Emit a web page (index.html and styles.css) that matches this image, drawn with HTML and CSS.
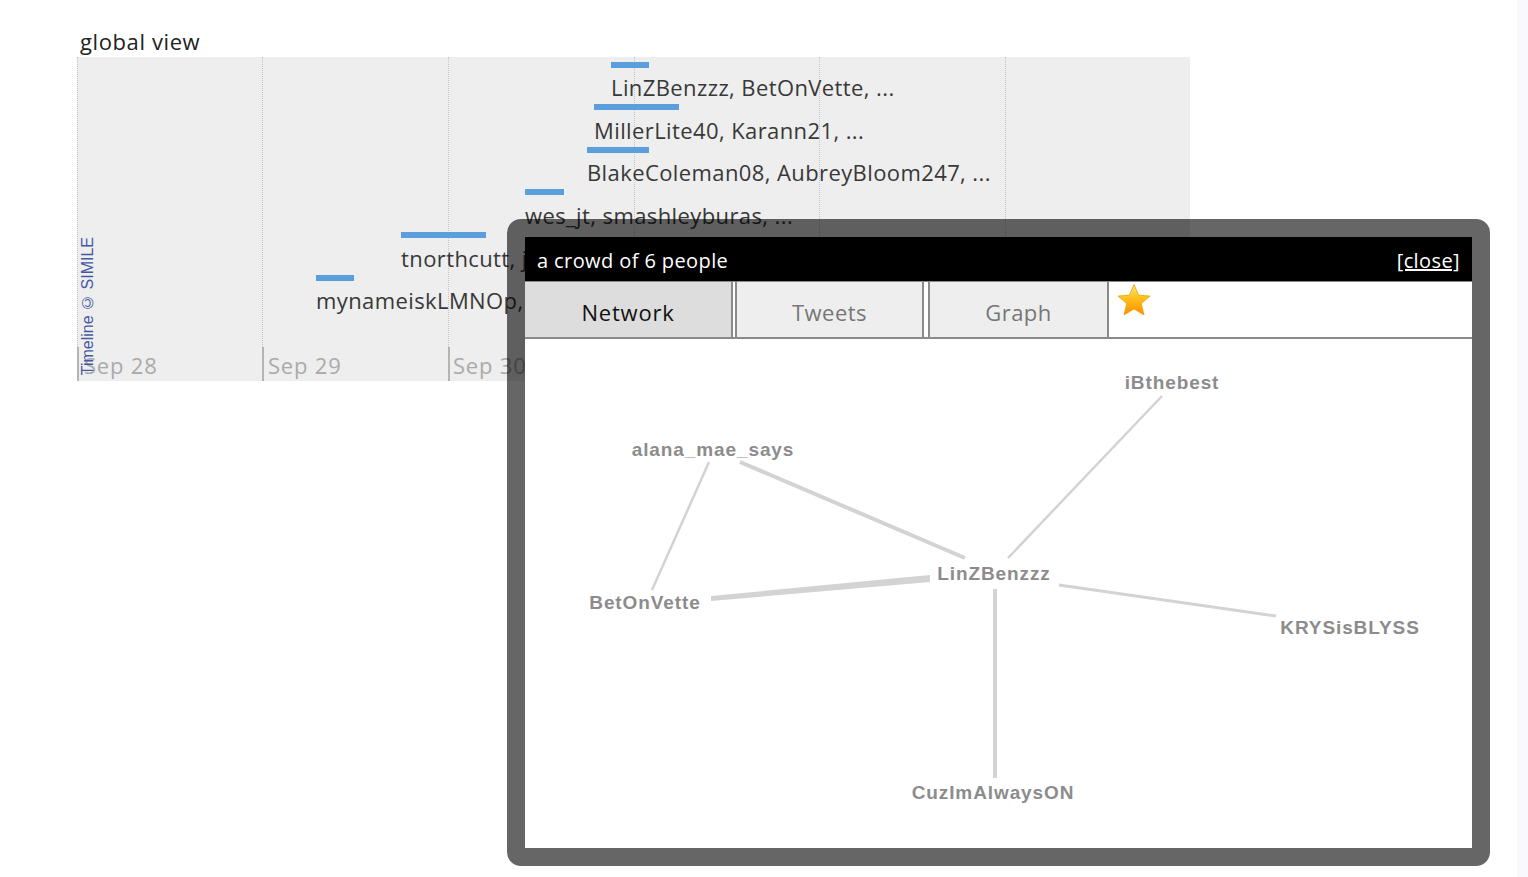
FILE: index.html
```html
<!DOCTYPE html>
<html>
<head>
<meta charset="utf-8">
<title>global view</title>
<link rel="stylesheet" href="styles.css">
</head>
<body>
<div class="page">
  <h1 class="title">global view</h1>
  <div class="band">
    <div class="grid" style="left:0px"></div>
    <div class="grid" style="left:185px"></div>
    <div class="grid" style="left:371px"></div>
    <div class="grid" style="left:557px"></div>
    <div class="grid" style="left:742px"></div>
    <div class="grid" style="left:928px"></div>

    <div class="tick" style="left:0px"></div>
    <div class="tick" style="left:185px"></div>
    <div class="tick" style="left:371px"></div>
    <div class="tick" style="left:557px"></div>
    <div class="tick" style="left:742px"></div>
    <div class="tick" style="left:928px"></div>

    <div class="date" style="left:7px">Sep 28</div>
    <div class="date" style="left:191px">Sep 29</div>
    <div class="date" style="left:376px">Sep 30</div>
    <div class="date" style="left:562px">Oct 1</div>
    <div class="date" style="left:747px">Oct 2</div>
    <div class="date" style="left:933px">Oct 3</div>

    <div class="credit">Timeline © SIMILE</div>

    <div class="bar" style="left:534px;top:5px;width:38px"></div>
    <div class="label" style="left:534px;top:18px">LinZBenzzz, BetOnVette, ...</div>
    <div class="bar" style="left:517px;top:47px;width:85px"></div>
    <div class="label" style="left:517px;top:61px">MillerLite40, Karann21, ...</div>
    <div class="bar" style="left:510px;top:90px;width:62px"></div>
    <div class="label" style="left:510px;top:103px">BlakeColeman08, AubreyBloom247, ...</div>
    <div class="bar" style="left:448px;top:132px;width:39px"></div>
    <div class="label" style="left:448px;top:146px">wes_jt, smashleyburas, ...</div>
    <div class="bar" style="left:324px;top:175px;width:85px"></div>
    <div class="label" style="left:324px;top:189px">tnorthcutt, jessicaxo, ...</div>
    <div class="bar" style="left:239px;top:218px;width:38px"></div>
    <div class="label" style="left:239px;top:231px">mynameiskLMNOp, ...</div>
  </div>

  <div class="popup">
    <div class="popup-head">
      <span class="popup-title">a crowd of 6 people</span>
      <a class="popup-close" href="#">[close]</a>
    </div>
    <div class="tabs">
      <div class="tab tab-active">Network</div>
      <div class="tab tab-tweets">Tweets</div>
      <div class="tab tab-graph">Graph</div>
      <svg class="star" width="36" height="36" viewBox="0 0 36 36">
        <defs>
          <linearGradient id="sg" x1="0" y1="0" x2="0" y2="1">
            <stop offset="0" stop-color="#ffe27a"/>
            <stop offset="0.45" stop-color="#ffc21a"/>
            <stop offset="1" stop-color="#ff8a00"/>
          </linearGradient>
        </defs>
        <path d="M18 1.5 L22.6 12.2 L34 13.1 L25.3 20.6 L28 32 L18 25.9 L8 32 L10.7 20.6 L2 13.1 L13.4 12.2 Z" fill="url(#sg)" stroke="#f0a000" stroke-width="0.8" stroke-linejoin="round"/>
      </svg>
    </div>
    <div class="content">
      <svg class="network" width="947" height="509" viewBox="0 0 947 509">
        <g stroke="#d3d3d3" stroke-linecap="butt">
          <line x1="184" y1="123" x2="127" y2="251" stroke-width="2.5"/>
          <line x1="215" y1="123" x2="440" y2="219" stroke-width="4"/>
          <polygon points="186,257 405,236 405,243 186,262" fill="#d3d3d3" stroke="none"/>
          <line x1="483" y1="219" x2="637" y2="57" stroke-width="2.5"/>
          <line x1="534" y1="246" x2="751" y2="277" stroke-width="3"/>
          <line x1="470" y1="250" x2="470" y2="439" stroke-width="4"/>
        </g>
        <g class="nodes">
          <text x="647" y="43">iBthebest</text>
          <text x="188" y="110">alana_mae_says</text>
          <text x="469" y="234">LinZBenzzz</text>
          <text x="120" y="263">BetOnVette</text>
          <text x="825" y="288">KRYSisBLYSS</text>
          <text x="468" y="453">CuzImAlwaysON</text>
        </g>
      </svg>
    </div>
  </div>
</div>
</body>
</html>
```

FILE: styles.css
```css
html, body {
  margin: 0;
  padding: 0;
}
body {
  background: #f8f8fd;
  width: 1528px;
  height: 877px;
  overflow: hidden;
  font-family: "Open Sans", "Noto Sans", sans-serif;
}
.page {
  position: relative;
  width: 1517px;
  height: 877px;
  background: #ffffff;
  padding: 27px 0 0 77px;
  box-sizing: border-box;
}
.title {
  margin: 0 0 0 3px;
  font-weight: normal;
  font-size: 22px;
  letter-spacing: 0.6px;
  line-height: 28px;
  height: 30px;
  color: #222;
}
.band {
  position: relative;
  width: 1113px;
  height: 324px;
  background: #eeeeee;
  overflow: hidden;
}
.grid {
  position: absolute;
  top: 0;
  bottom: 0;
  width: 0;
  border-left: 1px dotted #c4c4c4;
}
.tick {
  position: absolute;
  bottom: 0;
  height: 34px;
  width: 2px;
  background: #b4b4b4;
}
.date {
  position: absolute;
  top: 295px;
  font-size: 22px;
  letter-spacing: 0.8px;
  line-height: 26px;
  color: #aaaaaa;
  white-space: nowrap;
}
.credit {
  position: absolute;
  left: 3px;
  bottom: 6px;
  writing-mode: vertical-rl;
  transform: rotate(180deg);
  font-family: "Liberation Sans", Arial, sans-serif;
  font-size: 16px;
  line-height: 16px;
  color: #4559a3;
  white-space: nowrap;
}
.bar {
  position: absolute;
  height: 6px;
  background: #5a9fdc;
}
.label {
  position: absolute;
  font-size: 22px;
  letter-spacing: 0.4px;
  line-height: 24px;
  color: #383838;
  white-space: nowrap;
}
.popup {
  position: absolute;
  left: 507px;
  top: 219px;
  width: 983px;
  height: 647px;
  box-sizing: border-box;
  border: 18px solid rgba(0, 0, 0, 0.6);
  border-radius: 14px;
  background-clip: padding-box;
  display: flex;
  flex-direction: column;
}
.popup-head {
  height: 44px;
  background: #000;
  display: flex;
  align-items: center;
  justify-content: space-between;
  padding: 2px 12px 0 12px;
  box-sizing: border-box;
  color: #fff;
  font-size: 20px;
  letter-spacing: 0.4px;
}
.popup-title {
  color: #fff;
}
.popup-close {
  color: #fff;
  text-decoration: underline;
}
.tabs {
  height: 58px;
  box-sizing: border-box;
  background: #fff;
  border-top: 1px solid #8a8a8a;
  border-bottom: 2px solid #8a8a8a;
  display: flex;
  align-items: stretch;
}
.tab {
  display: flex;
  align-items: center;
  justify-content: center;
  box-sizing: border-box;
  padding-top: 4px;
  font-size: 22px;
  letter-spacing: 0.5px;
  color: #777;
  background: #eeeeee;
  border-left: 2px solid #8a8a8a;
  border-right: 2px solid #8a8a8a;
}
.tab-active {
  width: 208px;
  background: #dddddd;
  border-left: none;
  color: #111;
  letter-spacing: 0.8px;
}
.tab-tweets {
  width: 189px;
  margin-left: 2px;
}
.tab-graph {
  width: 181px;
  margin-left: 4px;
}
.star {
  margin: 1px 0 0 7px;
}
.content {
  flex: 1;
  position: relative;
  background: #fff;
}
.network {
  position: absolute;
  left: 0;
  top: 0;
}
.nodes text {
  font-family: "Liberation Sans", Arial, sans-serif;
  font-weight: bold;
  font-size: 19px;
  letter-spacing: 0.9px;
  fill: #8c8c8c;
  text-anchor: middle;
  dominant-baseline: central;
}
```
